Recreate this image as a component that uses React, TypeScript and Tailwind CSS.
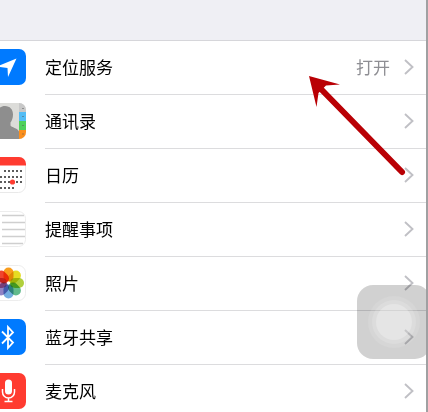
import type { ReactNode } from "react";

type Item = {
    id: string;
    label: string;
    value?: string;
    icon: ReactNode;
};

const DAY_DOTS = [
    [15, 14], [19, 14], [23, 14], [27, 14], [31, 14],
    [7, 20], [11, 20], [15, 20], [19, 20], [23, 20], [27, 20], [31, 20],
    [7, 25], [11, 25], [15, 25], [19, 25], [27, 25], [31, 25],
    [7, 31], [11, 31], [15, 31], [19, 31], [23, 31],
];

const PETALS = [
    { angle: 0, color: "#f99d1c" },
    { angle: 45, color: "#e6dc22" },
    { angle: 90, color: "#b0cf3c" },
    { angle: 135, color: "#62bb8c" },
    { angle: 180, color: "#74aee0" },
    { angle: 225, color: "#9083c4" },
    { angle: 270, color: "#cf7aa0" },
    { angle: 315, color: "#f0452e" },
];

function LocationIcon() {
    return (
        <svg viewBox="0 0 36 36" className="size-9">
            <rect width="36" height="36" rx="7" fill="#007aff" />
            <path d="M26.5 9.5 7 17.500l10.500 1.500L18 28z" fill="#fff" />
        </svg>
    );
}

function ContactsIcon() {
    return (
        <svg viewBox="0 0 36 36" className="size-9">
            <clipPath id="contacts-shape">
                <rect width="36" height="36" rx="7" />
            </clipPath>
            <g clipPath="url(#contacts-shape)">
                <rect width="36" height="36" fill="#dcdcd9" />
                <path
                    d="M15 3c5 0 8 3.500 8 8.500 0 3.500-1 6-2.500 8v3c1 2 7 2.500 8.500 6V36H0V28c2-3 8-3.500 9.500-5.500v-3C8 17.500 7 15 7 11.500 7 6.500 10 3 15 3z"
                    fill="#8e8e8e"
                />
                <rect x="29" width="7" height="9" fill="#c8c8c8" />
                <rect x="29" y="9" width="7" height="9" fill="#54bdf5" />
                <rect x="29" y="18" width="7" height="9" fill="#4fd05c" />
                <rect x="29" y="27" width="7" height="9" fill="#fb8f1d" />
                <path d="M32 5.500h2M32 13.500h2M32 22.500h2M32 31h2" stroke="#555" strokeOpacity=".5" />
            </g>
        </svg>
    );
}

function CalendarIcon() {
    return (
        <svg viewBox="0 0 36 36" className="size-9">
            <rect x=".5" y=".5" width="35" height="35" rx="7" fill="#fff" stroke="#e9e9e9" />
            <path d="M0 8.500V7a7 7 0 0 1 7-7h22a7 7 0 0 1 7 7v1.500z" fill="#ff3b30" />
            {DAY_DOTS.map(([x, y]) => (
                <rect key={`${x}-${y}`} x={x - 1} y={y - 1} width="2" height="2" fill="#5c5c5c" />
            ))}
            <circle cx="22.500" cy="25" r="2.600" fill="#ff3b30" />
        </svg>
    );
}

function RemindersIcon() {
    return (
        <svg viewBox="0 0 36 36" className="size-9">
            <rect x=".5" y=".5" width="35" height="35" rx="7" fill="#fff" stroke="#ededed" />
            <path d="M12 4.500h22M12 11.500h23M12 18.500h23M12 25.500h23M12 32.500h21" stroke="#cfcfcf" strokeWidth="1.500" />
        </svg>
    );
}

function PhotosIcon() {
    return (
        <svg viewBox="0 0 36 36" className="size-9">
            <rect x=".5" y=".5" width="35" height="35" rx="7" fill="#fff" stroke="#ededed" />
            {PETALS.map(({ angle, color }) => (
                <rect
                    key={angle}
                    x="13.500"
                    y="2.500"
                    width="10"
                    height="14"
                    rx="5"
                    fill={color}
                    transform={`rotate(${angle} 18.5 18)`}
                    className="mix-blend-multiply"
                />
            ))}
        </svg>
    );
}

function BluetoothIcon() {
    return (
        <svg viewBox="0 0 36 36" className="size-9">
            <rect width="36" height="36" rx="7" fill="#007aff" />
            <path d="m12 12.500 11 11-5 5.500V8l5 5.500-11 11" fill="none" stroke="#fff" strokeWidth="1.800" />
        </svg>
    );
}

function MicrophoneIcon() {
    return (
        <svg viewBox="0 0 36 36" className="size-9">
            <rect width="36" height="36" rx="7" fill="#ff3b30" />
            <rect x="15" y="6.500" width="7" height="15" rx="3.500" fill="#fff" />
            <path d="M12.500 16v3a6 6 0 0 0 12 0v-3M18.500 25v3.500M14.500 28.500h8" fill="none" stroke="#fff" strokeWidth="1.500" />
        </svg>
    );
}

function Chevron() {
    return (
        <svg viewBox="0 0 10 16" className="h-4 w-[10px]">
            <path d="m1 1 7.500 7L1 15" fill="none" stroke="#c0c0c5" strokeWidth="1.900" />
        </svg>
    );
}

const ITEMS: Item[] = [
    { id: "location", label: "定位服务", value: "打开", icon: <LocationIcon /> },
    { id: "contacts", label: "通讯录", icon: <ContactsIcon /> },
    { id: "calendar", label: "日历", icon: <CalendarIcon /> },
    { id: "reminders", label: "提醒事项", icon: <RemindersIcon /> },
    { id: "photos", label: "照片", icon: <PhotosIcon /> },
    { id: "bluetooth", label: "蓝牙共享", icon: <BluetoothIcon /> },
    { id: "microphone", label: "麦克风", icon: <MicrophoneIcon /> },
];

function Row({ id, label, value, icon }: Item) {
    return (
        <li>
            <a href={`#${id}`} className="flex gap-[19px]">
                <span className="-ml-[10px] shrink-0 pt-2">{icon}</span>
                <span className="flex h-[54px] flex-1 items-start border-b border-[#dcdcde] pt-[15px] pr-3">
                    <span className="flex-1 text-[17px] leading-[26px] text-black">{label}</span>
                    {value && <span className="mr-[14px] text-[17px] leading-[26px] text-[#8e8e93]">{value}</span>}
                    <span className="pt-[3px]">
                        <Chevron />
                    </span>
                </span>
            </a>
        </li>
    );
}

export default function App() {
    return (
        <main className="relative h-screen overflow-hidden border-r-2 border-[#a0a0a2] bg-white font-['Liberation_Sans','Noto_Sans_CJK_SC',sans-serif]">
            <header className="h-[41px] border-b border-[#d6d6da] bg-[#efeff4]" />
            <ul>
                {ITEMS.map((item) => (
                    <Row key={item.id} {...item} />
                ))}
            </ul>

            {/* Floating touch button */}
            <button
                type="button"
                aria-label="AssistiveTouch"
                className="absolute top-[285px] -right-[5px] flex size-[74px] items-center justify-center rounded-2xl bg-black/18"
            >
                <span className="flex size-[52px] items-center justify-center rounded-full bg-white/10">
                    <span className="flex size-[44px] items-center justify-center rounded-full bg-white/15">
                        <span className="size-9 rounded-full bg-white/25" />
                    </span>
                </span>
            </button>

            {/* Arrow pointing at the first row */}
            <svg viewBox="0 0 98 102" className="pointer-events-none absolute top-[75px] right-[19px] h-[102px] w-[98px]">
                <path d="M0 1l31 8.500-14 1L9.500 18 7.500 32z" fill="#b90005" />
                <path d="M10 12l83 85" stroke="#b90005" strokeWidth="6" strokeLinecap="round" />
            </svg>
        </main>
    );
}
